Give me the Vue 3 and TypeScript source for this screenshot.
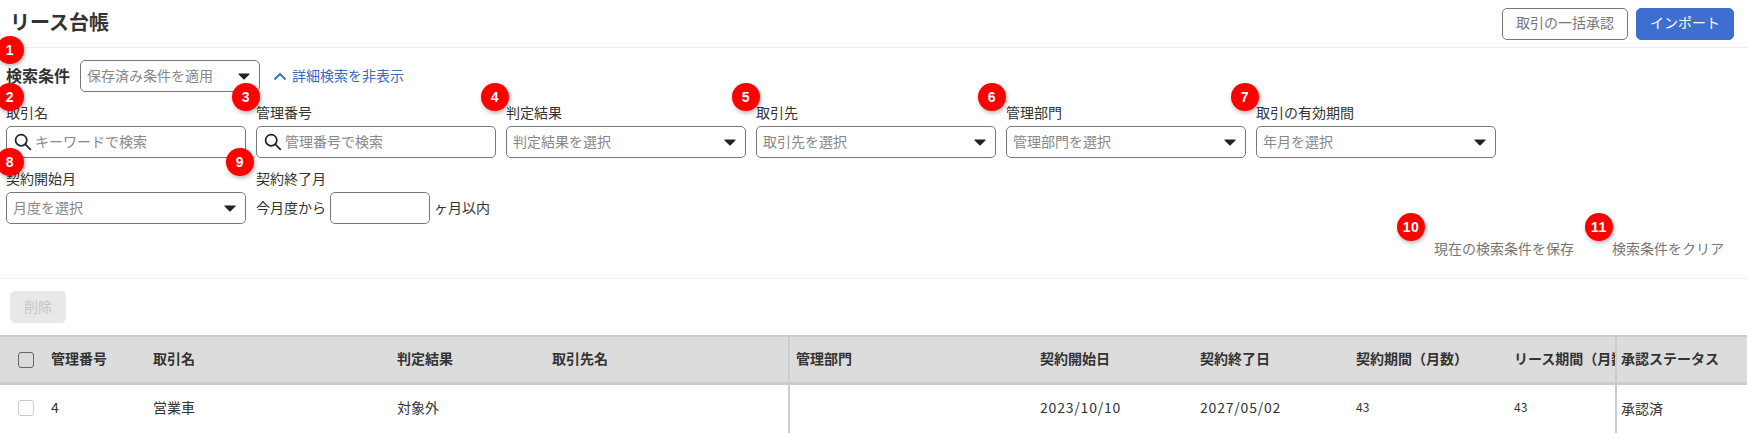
<script setup lang="ts">
interface Field { label: string; placeholder: string; kind: 'search' | 'select' }

const fields: Field[] = [
  { label: '取引名', placeholder: 'キーワードで検索', kind: 'search' },
  { label: '管理番号', placeholder: '管理番号で検索', kind: 'search' },
  { label: '判定結果', placeholder: '判定結果を選択', kind: 'select' },
  { label: '取引先', placeholder: '取引先を選択', kind: 'select' },
  { label: '管理部門', placeholder: '管理部門を選択', kind: 'select' },
  { label: '取引の有効期間', placeholder: '年月を選択', kind: 'select' },
  { label: '契約開始月', placeholder: '月度を選択', kind: 'select' },
]

const headers = ['管理番号', '取引名', '判定結果', '取引先名', '管理部門', '契約開始日', '契約終了日', '契約期間（月数）', 'リース期間（月数）', '承認ステータス']
const row = ['4', '営業車', '対象外', '', '', '2023/10/10', '2027/05/02', '43', '43', '承認済']

const cellClass = (i: number) => ({
  divider: i === 4 || i === 9,
  date: i === 5 || i === 6,
  small: i === 7 || i === 8,
})

const badges = [
  { n: 1, x: 10, y: 50 },
  { n: 2, x: 10, y: 97 },
  { n: 3, x: 246, y: 97 },
  { n: 4, x: 495, y: 97 },
  { n: 5, x: 746, y: 97 },
  { n: 6, x: 992, y: 97 },
  { n: 7, x: 1245, y: 97 },
  { n: 8, x: 10, y: 162 },
  { n: 9, x: 240, y: 162 },
  { n: 10, x: 1411, y: 227 },
  { n: 11, x: 1599, y: 227 },
]
</script>

<template>
  <div class="page">
    <header class="top">
      <h1 class="title">リース台帳</h1>
      <div class="top-actions">
        <button class="btn outline">取引の一括承認</button>
        <button class="btn primary">インポート</button>
      </div>
    </header>

    <section class="search">
      <div class="search-head">
        <span class="search-title">検索条件</span>
        <div class="control select saved">
          <span class="ph">保存済み条件を適用</span>
          <svg class="caret" viewBox="0 0 12 7"><path d="M1 .6h10c.5 0 .8.6.4 1L6.6 6.2c-.3.3-.9.3-1.2 0L.6 1.6c-.4-.4-.1-1 .4-1z" /></svg>
        </div>
        <a class="toggle">
          <svg class="chev" viewBox="0 0 14 9"><path d="M1.5 7.5 7 2l5.500 5.500" /></svg>
          <span class="up">詳細検索を非表示</span>
        </a>
      </div>

      <div class="fields">
        <div v-for="f in fields" :key="f.label" class="field">
          <label class="label">{{ f.label }}</label>
          <div v-if="f.kind === 'search'" class="control">
            <svg class="lens" viewBox="0 0 18 18"><circle cx="7.200" cy="7.200" r="5.600" /><path d="m11.400 11.400 5.400 5.400" /></svg>
            <span class="ph">{{ f.placeholder }}</span>
          </div>
          <div v-else class="control select">
            <span class="ph">{{ f.placeholder }}</span>
            <svg class="caret" viewBox="0 0 12 7"><path d="M1 .6h10c.5 0 .8.6.4 1L6.6 6.2c-.3.3-.9.3-1.2 0L.6 1.6c-.4-.4-.1-1 .4-1z" /></svg>
          </div>
        </div>
        <div class="field">
          <label class="label">契約終了月</label>
          <div class="months">
            <span class="up">今月度から</span>
            <div class="control month-input"></div>
            <span class="up">ヶ月以内</span>
          </div>
        </div>
      </div>

      <div class="search-actions">
        <a class="link">現在の検索条件を保存</a>
        <a class="link">検索条件をクリア</a>
      </div>
    </section>

    <div class="toolbar">
      <button class="btn disabled">削除</button>
    </div>

    <div class="table">
      <div class="tr head">
        <div class="cell check"><span class="box dark"></span></div>
        <div v-for="(h, i) in headers" :key="h" class="cell" :class="{ divider: i === 4 || i === 9 }"><span class="up">{{ h }}</span></div>
      </div>
      <div class="tr body">
        <div class="cell check"><span class="box"></span></div>
        <div v-for="(c, i) in row" :key="i" class="cell" :class="cellClass(i)"><span class="up">{{ c }}</span></div>
      </div>
    </div>

    <span
      v-for="b in badges"
      :key="b.n"
      class="badge"
      :style="{ left: b.x - 14 + 'px', top: b.y - 14 + 'px' }"
    >{{ b.n }}</span>
  </div>
</template>

<style>
html, body { margin: 0; background: #fff; }
</style>

<style scoped>
.page {
  position: relative;
  width: 1747px;
  height: 433px;
  overflow: hidden;
  background: #fff;
  color: #333;
  font-family: "Noto Sans CJK JP", "Noto Sans", sans-serif;
  font-size: 14px;
  line-height: 20px;
}
.up { display: block; margin-bottom: 3px; }
.top {
  display: flex;
  justify-content: space-between;
  align-items: center;
  box-sizing: border-box;
  height: 48px;
  padding: 0 13px 0 10px;
  border-bottom: 1px solid #eee;
}
.title {
  margin: 0 0 3px;
  font-size: 20px;
  font-weight: 700;
  line-height: 30px;
  color: #333;
}
.top-actions { display: flex; gap: 8px; }
.btn {
  box-sizing: border-box;
  height: 32px;
  border-radius: 5px;
  font: inherit;
  padding: 0 0 3px;
}
.btn.outline { width: 126px; background: #fff; border: 1px solid #777; color: #777; }
.btn.primary { width: 98px; background: #3d6fd1; border: 1px solid #3d6fd1; color: #fff; }
.btn.disabled { width: 56px; background: #e8e8e8; border: 1px solid #e8e8e8; color: #c6c6c6; }
.search { padding: 12px 23px 0 6px; }
.search-head { display: flex; align-items: center; height: 32px; }
.search-title { width: 74px; font-size: 16px; font-weight: 700; margin-bottom: 2px; }
.control {
  box-sizing: border-box;
  display: flex;
  align-items: center;
  height: 32px;
  padding: 0 6px;
  background: #fff;
  border: 1px solid #777;
  border-radius: 5px;
}
.select { justify-content: space-between; padding-right: 9px; }
.saved { width: 180px; }
.ph { display: block; margin-bottom: 3px; color: #888; }
.caret { width: 12px; height: 7px; fill: #222; flex: none; }
.toggle { display: flex; align-items: center; gap: 5px; margin-left: 13px; color: #3d6ab8; }
.chev { width: 14px; height: 9px; fill: none; stroke: #3d6fd1; stroke-width: 2; }
.lens { width: 18px; height: 18px; margin: 0 3px 0 1px; fill: none; stroke: #222; stroke-width: 1.700; flex: none; }
.fields {
  display: grid;
  grid-template-columns: repeat(6, 240px);
  gap: 0 10px;
  margin-top: 11px;
}
.field { height: 66px; }
.label { display: block; height: 20px; margin-bottom: 3px; line-height: 18px; }
.months { display: flex; align-items: center; gap: 4px; }
.month-input { width: 100px; }
.search-actions {
  display: flex;
  justify-content: flex-end;
  gap: 38px;
  margin-top: 4px;
  padding-bottom: 19px;
}
.link { color: #777; line-height: 18px; height: 20px; }
.toolbar { border-top: 1px solid #eee; padding: 12px 10px; }
.table { display: flex; flex-direction: column; }
.tr {
  display: grid;
  grid-template-columns: 51px 102px 244px 155px 236px 252px 160px 156px 158px 101px 132px;
  box-sizing: border-box;
}
.head {
  height: 50px;
  background: #dcdcdc;
  border-top: 2px solid #ccc;
  border-bottom: 3px solid #ccc;
  font-weight: 700;
}
.body { height: 48px; }
.cell {
  display: flex;
  align-items: center;
  overflow: hidden;
  white-space: nowrap;
}
.body .cell { height: 46px; }
.body .divider { height: 48px; }
.cell.divider { border-left: 2px solid #ccc; padding-left: 6px; }
.cell.divider:last-child { padding-left: 4px; }
.cell.date { letter-spacing: .8px; }
.cell.small { font-size: 12px; }
.check { padding-left: 18px; box-sizing: border-box; }
.box {
  box-sizing: border-box;
  width: 16px;
  height: 16px;
  background: #fff;
  border: 1px solid #ccc;
  border-radius: 3px;
}
.box.dark { background: transparent; border: 1.500px solid #666; }
.badge {
  position: absolute;
  width: 28px;
  height: 28px;
  border-radius: 50%;
  background: #f00;
  color: #fff;
  font-family: "Liberation Sans", sans-serif;
  font-size: 14px;
  font-weight: 700;
  line-height: 28px;
  letter-spacing: .5px;
  text-align: center;
  box-shadow: 1px 2px 4px rgba(0, 0, 0, .3);
}
</style>
